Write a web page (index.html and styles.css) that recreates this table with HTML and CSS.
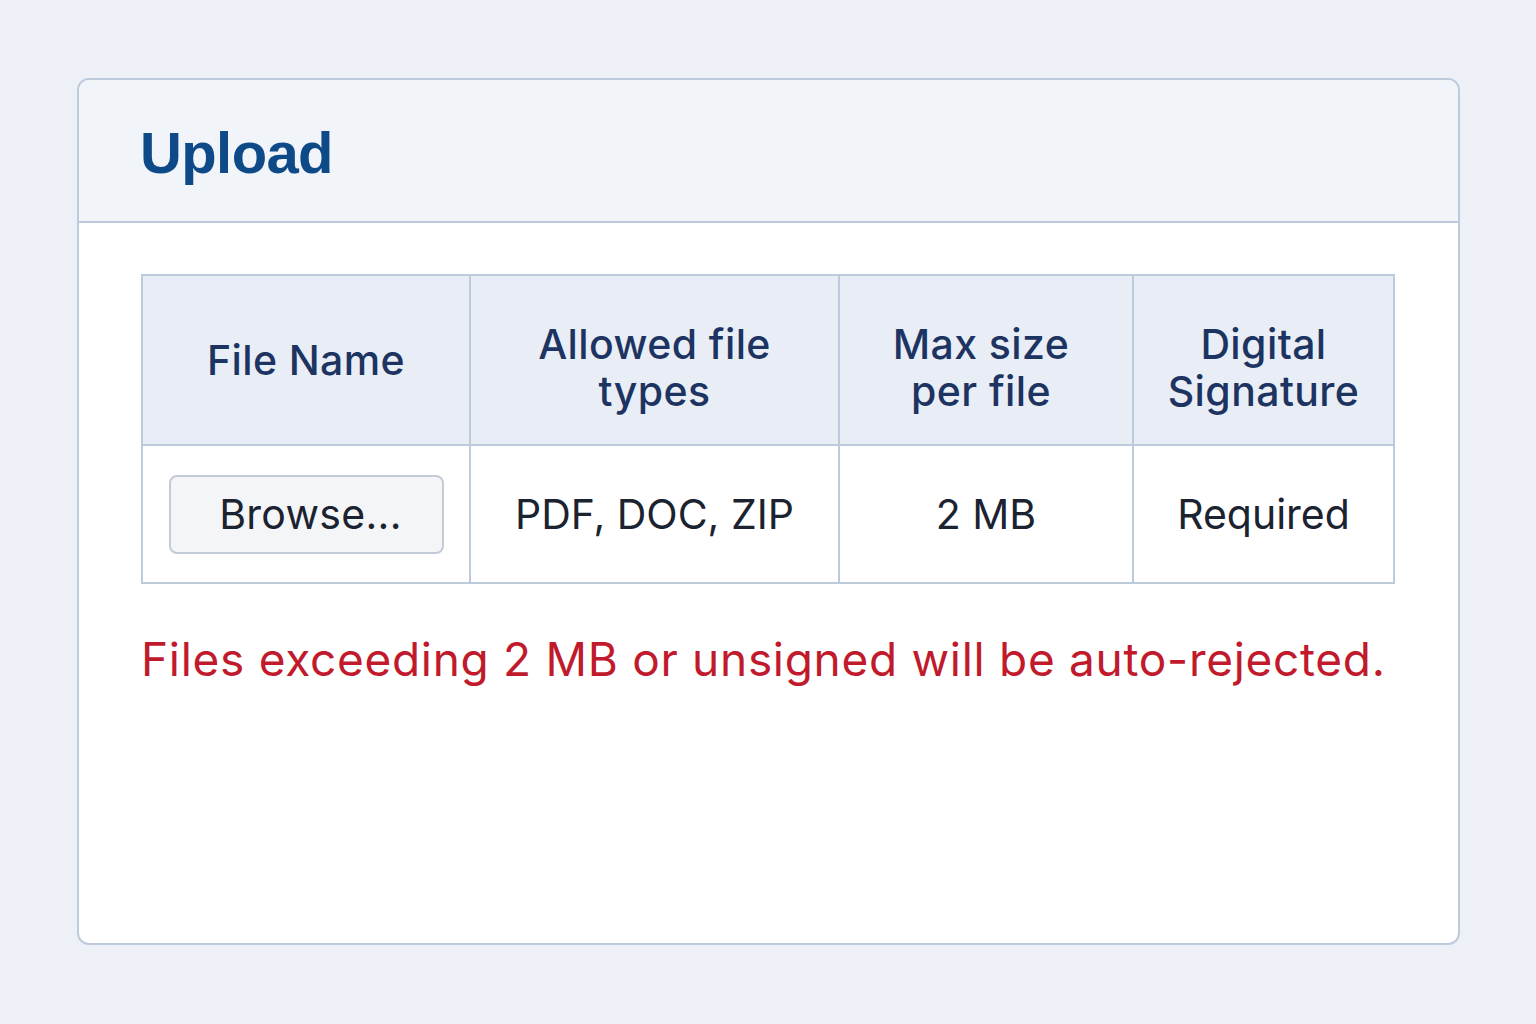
FILE: index.html
```html
<!DOCTYPE html>
<html lang="en">
<head>
<meta charset="utf-8">
<title>Upload</title>
<link rel="stylesheet" href="styles.css">
</head>
<body>
<div class="page">
  <section class="card">
    <header class="card-header">
      <h1 class="title">Upload</h1>
    </header>
    <div class="card-body">
      <table class="upload-table">
        <colgroup>
          <col class="c1"><col class="c2"><col class="c3"><col class="c4">
        </colgroup>
        <thead>
          <tr>
            <th>File Name</th>
            <th class="two-line">Allowed file<br>types</th>
            <th class="two-line shift-left">Max size<br>per file</th>
            <th class="two-line">Digital<br>Signature</th>
          </tr>
        </thead>
        <tbody>
          <tr>
            <td><button class="browse" type="button">Browse...</button></td>
            <td>PDF, DOC, ZIP</td>
            <td>2 MB</td>
            <td>Required</td>
          </tr>
        </tbody>
      </table>
      <p class="warning">Files exceeding 2 MB or unsigned will be auto-rejected.</p>
    </div>
  </section>
</div>
</body>
</html>
```
FILE: styles.css
```css
html, body {
  margin: 0;
  padding: 0;
}
body {
  background: #edf1f7;
  font-family: Inter, "Noto Sans", "Liberation Sans", sans-serif;
  width: 1536px;
  height: 1024px;
  overflow: hidden;
}
.page {
  padding: 78px 0 0 77px;
}
.card {
  width: 1383px;
  height: 867px;
  box-sizing: border-box;
  border: 2px solid #bccadc;
  border-radius: 12px;
  background: #ffffff;
  overflow: hidden;
}
.card-header {
  height: 143px;
  box-sizing: border-box;
  background: #f1f4f9;
  border-bottom: 2px solid #bccadc;
  padding-left: 61px;
  display: flex;
  align-items: center;
}
.title {
  margin: 0;
  font-family: "Liberation Sans", Arial, sans-serif;
  font-weight: 700;
  font-size: 58px;
  letter-spacing: -0.6px;
  color: #0f4a88;
  padding-top: 4px;
}
.card-body {
  padding: 51px 0 0 62px;
}
.upload-table {
  border-collapse: collapse;
  table-layout: fixed;
  width: 1252px;
}
.c1 { width: 328px; }
.c2 { width: 369px; }
.c3 { width: 294px; }
.c4 { width: 261px; }
.upload-table th,
.upload-table td {
  border: 2px solid #bccadc;
  text-align: center;
  vertical-align: middle;
  padding: 0;
}
.upload-table th {
  height: 170px;
  box-sizing: border-box;
  background: #e9eef6;
  color: #1d3462;
  font-weight: 500;
  font-size: 41px;
  letter-spacing: 0.4px;
  line-height: 48px;
}
.upload-table th.two-line {
  padding-top: 16px;
  line-height: 47px;
}
.upload-table th.shift-left {
  padding-right: 10px;
}
.upload-table td {
  height: 138px;
  box-sizing: border-box;
  color: #1b2230;
  font-size: 41px;
}
.browse {
  display: block;
  margin: 0 0 0 26px;
  width: 275px;
  height: 79px;
  border: 2px solid #c3cbd6;
  border-radius: 8px;
  background: #f4f5f7;
  font-family: Inter, "Noto Sans", "Liberation Sans", sans-serif;
  font-size: 41px;
  letter-spacing: 0.3px;
  color: #1b2230;
  padding: 0 0 0 8px;
}
.warning {
  margin: 47px 0 0 0;
  color: #c01a2c;
  font-size: 46px;
  letter-spacing: 0.7px;
  line-height: 56px;
}
```
